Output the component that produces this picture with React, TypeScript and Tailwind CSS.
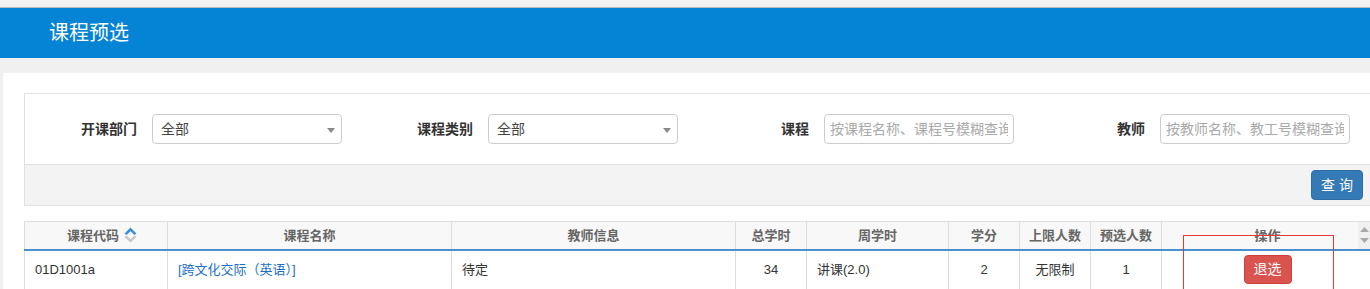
import React from "react";

const columns = [
  { key: "code", title: "课程代码", width: "w-[143px] pl-[12px]", sort: true },
  { key: "name", title: "课程名称", width: "w-[284px]" },
  { key: "teacher", title: "教师信息", width: "w-[284px]" },
  { key: "total", title: "总学时", width: "w-[71px]" },
  { key: "weekly", title: "周学时", width: "w-[142px]" },
  { key: "credit", title: "学分", width: "w-[71px]" },
  { key: "limit", title: "上限人数", width: "w-[71px]" },
  { key: "count", title: "预选人数", width: "w-[71px]" },
  { key: "op", title: "操作", width: "w-[212px]" },
];

const SortIcon = () => (
  <svg width="13" height="16" viewBox="0 0 13 16" className="inline-block ml-[5px] -mt-[3px] align-middle">
    <path d="M0.5 6.5 L6.5 0.5 L12.5 6.5 L10.5 8 L6.5 4.3 L2.5 8 Z" fill="#3b8de0" />
    <path d="M0.5 10 L2.5 8.6 L6.5 12.2 L10.5 8.6 L12.5 10 L6.5 15.5 Z" fill="#c8c8c8" />
  </svg>
);

const Caret = () => (
  <svg width="8" height="5" viewBox="0 0 8 5" className="absolute right-[6px] top-[13px]">
    <path d="M0 0 L8 0 L4 5 Z" fill="#888" />
  </svg>
);

const FilterSelect = ({ label }: { label: string }) => (
  <div className="flex items-center w-[336px]">
    <span className="w-[112px] text-right text-[14px] font-bold text-[#333]">{label}</span>
    <div className="relative ml-[15px] w-[190px] h-[30px] border border-[#ccc] rounded-[4px] bg-white flex items-center pl-[8px] text-[14px] text-[#444]">
      全部
      <Caret />
    </div>
  </div>
);

const FilterInput = ({ label, placeholder }: { label: string; placeholder: string }) => (
  <div className="flex items-center w-[336px]">
    <span className="w-[112px] text-right text-[14px] font-bold text-[#333]">{label}</span>
    <input
      className="ml-[15px] w-[190px] h-[30px] border border-[#ccc] rounded-[4px] bg-white px-[5px] text-[14px] outline-none placeholder:text-[#aaa]"
      placeholder={placeholder}
    />
  </div>
);

export default function App() {
  return (
    <div
      className="w-[1370px] h-[289px] overflow-hidden bg-[#f0f0f0] text-[13px] text-[#333]"
      style={{ fontFamily: '"Liberation Sans", "Noto Sans CJK SC", sans-serif' }}
    >
      <div className="h-[8px] bg-[#f2f2f2] border-b border-[#bbb]" />
      <div className="h-[50px] bg-[#0583d4] flex items-center pl-[49px]">
        <h1 className="text-[20px] text-white leading-none">课程预选</h1>
      </div>
      <div className="mt-[15px] ml-[3px] bg-white pl-[21px] pt-[20px] h-[300px]">
        <div className="w-[1400px] border border-[#e0e0e0]">
          <div className="h-[70px] flex items-center bg-white">
            <FilterSelect label="开课部门" />
            <FilterSelect label="课程类别" />
            <FilterInput label="课程" placeholder="按课程名称、课程号模糊查询" />
            <FilterInput label="教师" placeholder="按教师名称、教工号模糊查询" />
          </div>
          <div className="h-[41px] border-t border-[#e0e0e0] bg-[#f3f3f3] w-[1345px] flex items-center justify-end pr-[7px]">
            <button className="w-[52px] h-[30px] rounded-[4px] bg-[#337ab7] border border-[#2e6da4] text-white text-[14px] tracking-[4px] pl-[4px]">
              查询
            </button>
          </div>
        </div>

        <div className="relative mt-[15px]">
          <table className="border-collapse table-fixed w-[1350px]">
            <thead>
              <tr className="h-[28px] bg-[#f8f8f8] border-b-2 border-[#4a8fd0]">
                {columns.map((c) => (
                  <th
                    key={c.key}
                    className={`${c.width} border border-[#ddd] border-b-0 text-center font-bold text-[13px] text-[#666] py-0`}
                  >
                    {c.title}
                    {c.sort && <SortIcon />}
                  </th>
                ))}
              </tr>
            </thead>
            <tbody>
              <tr className="h-[40px]">
                <td className="border border-[#ddd] pl-[10px]">01D1001a</td>
                <td className="border border-[#ddd] pl-[10px]">
                  <a className="text-[#1b6fc8] cursor-pointer">[跨文化交际（英语）]</a>
                </td>
                <td className="border border-[#ddd] pl-[10px]">待定</td>
                <td className="border border-[#ddd] text-center">34</td>
                <td className="border border-[#ddd] pl-[10px]">讲课(2.0)</td>
                <td className="border border-[#ddd] text-center">2</td>
                <td className="border border-[#ddd] text-center">无限制</td>
                <td className="border border-[#ddd] text-center">1</td>
                <td className="border border-[#ddd] text-center">
                  <button className="w-[48px] h-[29px] rounded-[4px] bg-[#d9534f] border border-[#d43f3a] text-white text-[14px]">
                    退选
                  </button>
                </td>
              </tr>
            </tbody>
          </table>
          <div className="absolute left-[1334px] top-[1px] w-[12px] h-[27px] bg-[#f0f0f0] flex flex-col items-center pt-[5px] gap-[6px]">
            <svg width="9" height="5" viewBox="0 0 9 5"><path d="M0 5 L4.5 0 L9 5 Z" fill="#aaa" /></svg>
            <svg width="9" height="5" viewBox="0 0 9 5"><path d="M0 0 L4.5 5 L9 0 Z" fill="#aaa" /></svg>
          </div>
          <div className="absolute left-[1159px] top-[14px] w-[151px] h-[80px] border border-[#e53935]" />
        </div>
      </div>
    </div>
  );
}
